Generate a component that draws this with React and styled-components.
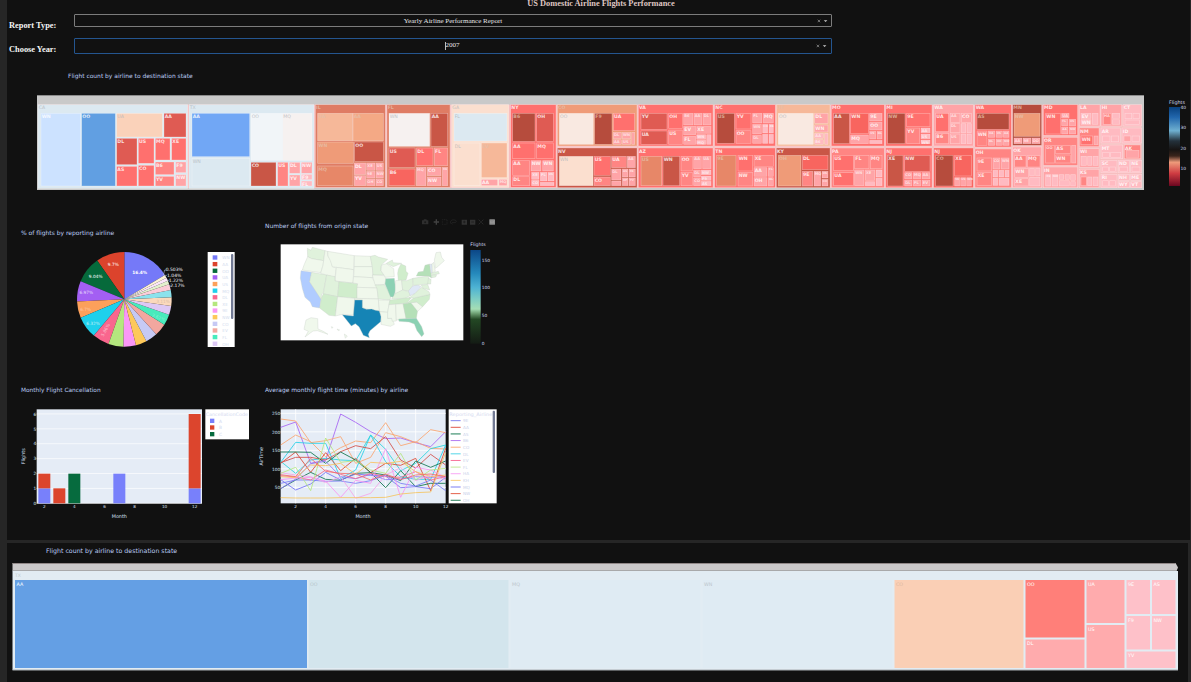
import React from 'react';
import styled, { createGlobalStyle } from 'styled-components';

const GlobalStyle = createGlobalStyle`
  html, body { margin: 0; padding: 0; background: #262626; overflow: hidden; }
  * { box-sizing: border-box; }
  svg { display: block; flex: none; }
`;

const sans = '"DejaVu Sans", Verdana, sans-serif';
const serif = '"Liberation Serif", "Times New Roman", serif';

const Page = styled.div`
  width: 1191px;
  height: 682px;
  display: flex;
  flex-direction: column;
  gap: 3px;
  padding-left: 7px;
  background: #262626;
`;
const Panel = styled.section`
  height: ${p => p.$height}px;
  margin-right: ${p => p.$right}px;
  background: #111111;
  overflow: hidden;
`;
const Heading = styled.h1`
  height: 14px;
  margin: 0;
  padding-left: 5px;
  text-align: center;
  font: bold 8.35px/7px ${serif};
  color: #dfc5c2;
`;
const FilterRow = styled.div`
  display: grid;
  grid-template-columns: 65px 758px;
  align-items: start;
  height: ${p => p.$height}px;
  padding-left: 2px;
`;
const FilterLabel = styled.label`
  padding-top: 6px;
  font: bold 8.4px/12px ${serif};
  color: #f4f4f4;
  white-space: nowrap;
`;
const Select = styled.div`
  display: flex;
  align-items: center;
  height: ${p => (p.$focused ? 16 : 13)}px;
  border: 1px solid ${p => (p.$focused ? '#24558f' : '#7c7c7c')};
  border-radius: 1px;
  padding-right: ${p => (p.$focused ? 4 : 3)}px;
`;
const SelectValue = styled.span`
  flex: 1;
  text-align: center;
  padding-left: 14px;
  padding-bottom: ${p => p.$lift || 0}px;
  font: 7.05px/10px ${serif};
  color: #e6e6e6;
`;
const Caret = styled.i`
  display: inline-block;
  width: 1px;
  height: 8px;
  margin-right: -1px;
  vertical-align: -3px;
  background: #bbbbbb;
`;
const FigureTitle = styled.h2`
  margin: 0;
  padding-top: ${p => p.$top || 0}px;
  padding-left: ${p => p.$indent}px;
  font: normal ${p => p.$size || 5.95}px/16px ${sans};
  color: #bccdf4;
  white-space: nowrap;
`;
const TreemapTitle = styled(FigureTitle)`
  height: ${p => p.$height}px;
`;
const TreemapRow = styled.div`
  display: flex;
  gap: 16px;
  padding-left: 30px;
`;
const FigureRow = styled.div`
  display: flex;
  height: ${p => p.$height}px;
`;
const Figure = styled.figure`
  width: ${p => p.$width}px;
  margin: 0;
  padding: ${p => p.$top}px 0 0;
`;
const FigureHead = styled.div`
  display: flex;
  justify-content: space-between;
  height: ${p => p.$height}px;
  padding-right: 5px;
`;
const Plot = styled.svg`
  margin-left: ${p => p.$left || 0}px;
  font-family: ${sans};
`;

/* Colour scale of the treemap tiles */
const C = {
  W: '#dce9f1', B: '#619fe2', b: '#71a7f5', l: '#cce2ff', w: '#f1f5f8', v: '#f6f1f0',
  p: '#fad2ba', q: '#fbdfcf', o: '#f6b899', e: '#f4a985', n: '#ef9b78', s: '#e78768', h: '#df7c64',
  k: '#b64c3d', c: '#c95646', d: '#df5b53', r: '#f8655f', t: '#ff706e', u: '#ff8583', f: '#ffa4a7', g: '#ffbac1', z: '#f9e9e1',
};

/* Each tile: x0, y0, x1, y1, colour key, label. One unit is a third of a pixel. */
const sections = [
  { x: 0, tiles: [
    [24,43,473,294,'W','CA'],[33,69,152,287,'l','WN'],[155,69,256,287,'B','OO'],[260,69,397,140,'p','UA'],[402,69,468,140,'d','AA'],
    [260,144,321,223,'d','DL'],[325,144,372,219,'t','US'],[376,144,420,209,'t','MQ'],[425,144,468,209,'t','XE'],
    [260,228,321,287,'t','AS'],[325,225,372,287,'t','CO'],[376,215,432,253,'u','B6'],[437,215,468,247,'f','F9'],[376,258,432,287,'u','YV'],[437,253,468,287,'f','NW'],
    [477,43,852,294,'W','TX'],[486,69,659,199,'b','AA'],[486,204,659,287,'W','WN'],[663,69,757,210,'w','OO'],[758,69,846,210,'v','MQ'],
    [663,216,738,287,'c','CO'],[743,216,774,287,'u','US'],[778,216,810,249,'f','DL'],[814,216,846,249,'f','NW'],[778,254,810,287,'f','YV'],[814,252,846,268,'g','F9'],[814,272,846,287,'g','FL'],
  ]},
  { x: 840, tiles: [
    [16,43,226,291,'h','IL'],[23,69,128,151,'o','UA'],[129,69,220,151,'e','AA'],[23,155,130,219,'n','WN'],[134,155,220,213,'c','OO'],[23,227,129,286,'s','MQ'],
    [133,218,167,253,'f','DL'],[133,256,167,286,'f','YV'],[170,218,195,240,'f','XE'],[198,218,220,240,'f','US'],[170,243,195,263,'f','9E'],[198,243,220,263,'f','NW'],[170,266,195,286,'f','OH'],[198,266,220,286,'f','CO'],
    [231,43,420,291,'h','FL'],[237,69,359,168,'v','WN'],[363,69,413,168,'c','AA'],[237,173,315,231,'d','US'],[320,173,369,226,'t','DL'],[373,173,413,226,'u','FL'],
    [237,236,315,286,'r','B6'],[319,231,348,286,'f','MQ'],[352,231,393,256,'f','CO'],[352,260,393,286,'f','NW'],[397,231,413,286,'f','XE'],
    [425,43,596,291,'q','GA'],[432,69,591,152,'W','FL'],[432,158,510,286,'q','DL'],[514,158,591,262,'o','EV'],[514,267,563,286,'f','AA'],[567,267,591,286,'f','MQ'],
    [602,43,738,291,'t','NY'],[608,69,675,153,'k','B6'],[680,69,730,153,'d','OH'],[608,158,675,205,'t','AA'],[680,158,730,205,'t','MQ'],
    [608,211,659,255,'u','AA'],[608,259,659,286,'u','DL'],[663,211,693,242,'f','NW'],[698,211,730,242,'f','WN'],[665,246,687,267,'g','XE'],[691,246,711,272,'g','FL'],[714,246,732,272,'g','US'],[665,270,687,286,'g','CO'],[691,276,732,286,'g',''],
  ]},
  { x: 1560, tiles: [
    [22,43,261,167,'n','CO'],[28,69,130,162,'z','OO'],[134,69,186,162,'k','F9'],[190,69,254,121,'t','UA'],[190,126,214,145,'f','DL'],[217,126,242,145,'f','WN'],[245,126,254,162,'f',''],[190,148,214,162,'f','AA'],[217,148,242,162,'f','US'],
    [22,173,261,292,'c','NV'],[28,198,129,286,'q','WN'],[132,198,181,255,'t','US'],[132,260,181,286,'u','CO'],[185,198,229,232,'u','UA'],[232,198,256,232,'f','AA'],[185,236,213,269,'f','DL'],[185,272,213,286,'f',''],[217,236,234,260,'f','AS'],[237,236,256,260,'f','XE'],[217,263,234,286,'f','HP'],[237,263,256,286,'f','YV'],
    [265,43,489,167,'t','VA'],[273,69,351,117,'d','YV'],[273,122,351,162,'d','UA'],[356,69,397,114,'t','OH'],[356,119,397,162,'u','US'],[401,69,429,104,'f','B6'],[432,69,456,104,'f','AA'],[459,69,483,104,'f','DL'],[401,108,437,134,'f','EV'],[401,138,437,162,'f','FL'],[440,108,483,129,'f','XE'],[440,133,467,147,'g','WN'],[440,150,467,162,'g','MQ'],[470,133,483,162,'g',''],
    [265,173,489,292,'t','AZ'],[273,198,335,286,'s','US'],[339,198,389,286,'c','WN'],[393,198,427,242,'u','OO'],[393,246,427,286,'u','YV'],[431,198,454,235,'f','AA'],[458,198,483,235,'f','UA'],[431,239,451,260,'f','DL'],[431,263,451,286,'f','CO'],[454,239,483,253,'g','NW'],[454,257,483,270,'g','F9'],[454,273,483,286,'g','AS'],
    [494,43,676,167,'t','NC'],[501,69,553,159,'k','US'],[558,69,603,116,'t','YV'],[558,121,603,159,'u','OO'],[608,69,636,98,'f','FL'],[640,69,670,98,'f','MQ'],[608,102,634,131,'f','WN'],[608,135,634,159,'f','DL'],[638,102,653,128,'g','CO'],[657,102,670,128,'g','XE'],[638,132,653,159,'g',''],[657,132,670,159,'g',''],
    [494,173,676,292,'t','TN'],[500,195,558,287,'s','9E'],[564,195,608,242,'t','WN'],[564,246,608,287,'u','NW'],[612,195,670,228,'u','XE'],[612,232,651,258,'f','AA'],[612,262,651,287,'f','OH'],[655,232,670,258,'f','FL'],[655,262,670,287,'f','DL'],
  ]},
  { x: 2220, tiles: [
    [19,43,180,167,'o','UT'],[25,69,130,162,'z','OO'],[134,69,174,99,'f','DL'],[134,104,174,125,'f','WN'],[134,129,160,144,'g','AA'],[134,148,160,162,'g','B6'],[164,129,174,162,'g',''],
    [19,173,180,292,'c','KY'],[25,195,93,287,'n','OH'],[97,195,174,238,'r','DL'],[97,243,128,287,'u','9E'],[132,243,152,287,'f','MQ'],[156,243,174,263,'f','US'],[156,267,174,287,'f','CO'],
    [184,43,343,167,'t','MO'],[191,69,238,160,'c','AA'],[242,69,295,130,'r','WN'],[242,134,295,160,'f','MQ'],[299,69,336,92,'f','9E'],[299,96,336,119,'f','OO'],[299,123,317,146,'f','US'],[321,123,336,146,'f','DL'],[299,150,336,160,'g',''],
    [184,173,343,292,'u','PA'],[191,195,250,241,'t','US'],[191,247,250,286,'t','UA'],[254,195,297,235,'u','FL'],[301,195,336,235,'u','MQ'],[254,239,282,286,'f','WN'],[286,239,314,270,'f','XE'],[318,239,336,260,'g',''],[318,264,336,286,'g',''],[286,274,314,286,'g',''],
    [347,43,486,167,'t','MI'],[353,69,405,160,'k','NW'],[410,69,480,109,'t','9E'],[410,113,449,160,'u','YV'],[453,113,480,127,'g','AA'],[453,131,480,145,'g','US'],[453,149,480,160,'g','WN'],
    [347,173,486,292,'t','NJ'],[353,195,399,287,'c','XE'],[404,195,480,243,'d','NW'],[404,247,426,265,'f','CO'],[430,247,452,265,'f','MQ'],[456,247,480,265,'f','AA'],[404,269,426,287,'f','DL'],[430,269,452,287,'f','FL'],[456,269,480,287,'f','EV'],
    [491,43,610,167,'f','WA'],[497,69,536,124,'t','UA'],[497,129,536,160,'u','B6'],[541,69,570,96,'f','AA'],[574,69,604,96,'f','CO'],[541,100,570,127,'f','DL'],[541,131,570,160,'f','US'],[574,100,587,127,'g',''],[591,100,604,127,'g',''],[574,131,587,160,'g',''],[591,131,604,160,'g',''],
    [491,173,610,292,'r','NJ'],[497,195,549,287,'k','CO'],[554,195,604,257,'r','XE'],[554,262,569,287,'f','9E'],[572,262,587,287,'f','US'],[590,262,604,287,'f','WN'],
  ]},
  { x: 2820, tiles: [
    [15,43,124,170,'t','WA'],[21,69,117,117,'k','AS'],[21,122,51,165,'u','WN'],[55,122,74,141,'f','UA'],[78,122,97,141,'f','US'],[100,122,117,141,'f','AA'],[55,146,74,165,'f','DL'],[78,146,97,165,'f','OO'],[100,146,117,165,'f','NW'],
    [15,176,124,292,'u','OH'],[21,203,65,242,'u','9E'],[21,247,65,285,'u','XE'],[69,203,90,236,'f','CO'],[94,203,117,236,'f','WN'],[69,240,83,260,'g',''],[87,240,101,260,'g',''],[105,240,117,260,'g',''],[69,264,83,285,'g',''],[87,264,117,285,'g',''],
    [128,43,215,165,'k','MN'],[132,69,210,138,'n','NW'],[132,143,156,160,'f','AA'],[159,143,183,160,'f','9E'],[186,143,210,160,'f','OO'],
    [128,170,215,292,'f','OK'],[134,196,168,230,'u','AA'],[172,196,210,230,'u','MQ'],[134,234,175,261,'f','WN'],[179,234,193,257,'g',''],[197,234,210,257,'g',''],[134,265,175,287,'f','XE'],[179,261,210,287,'g',''],
    [220,43,323,135,'t','MD'],[227,69,271,131,'t','WN'],[275,69,297,83,'f','UA'],[275,87,294,106,'f','FL'],[298,87,317,106,'f','US'],[275,110,294,131,'f','AA'],[298,110,317,131,'f','NW'],
    [220,141,323,225,'u','OR'],[227,165,253,218,'u','OO'],[257,165,301,190,'u','AS'],[257,194,301,218,'u','WN'],[305,165,317,218,'f',''],
    [220,230,323,292,'f','IN'],[227,253,242,287,'g','XE'],[246,253,264,287,'g','NW'],[268,253,281,267,'g',''],[285,253,298,267,'g',''],[302,253,316,270,'g',''],[268,271,298,287,'g',''],[302,274,316,287,'g',''],
    [328,43,390,107,'f','LA'],[333,69,363,84,'g','EV'],[333,88,363,102,'g','WN'],[367,69,384,102,'g',''],
    [328,113,387,169,'u','NM'],[333,137,368,163,'t','WN'],[372,137,384,163,'f',''],
    [328,175,387,231,'f','WI'],[333,198,349,225,'g',''],[353,198,365,225,'g',''],[369,198,384,225,'g',''],[328,237,387,292,'f','KS'],[333,260,349,286,'u',''],[353,260,365,286,'g',''],[369,260,384,286,'g',''],
    [393,43,455,107,'f','HI'],[400,69,423,102,'u','HA'],[427,69,449,84,'g',''],[427,88,449,102,'g',''],
    [459,43,515,107,'g','CT'],[465,69,485,85,'g',''],[489,69,508,85,'g',''],[465,89,508,102,'g',''],
    [393,113,451,158,'g','AR'],[398,137,420,154,'g',''],[424,137,446,154,'g',''],[456,113,515,158,'g','ID'],[462,137,482,153,'f',''],[486,137,509,153,'g',''],
    [393,164,458,205,'g','MT'],[398,186,418,201,'g',''],[422,186,452,201,'g',''],[463,164,512,205,'u','AK'],[468,180,507,201,'f',''],
    [393,210,441,247,'g','SC'],[398,230,415,243,'g',''],[419,230,436,243,'g',''],[445,210,478,247,'g','ND'],[449,230,473,243,'g',''],[482,210,515,247,'g','NE'],[486,230,510,243,'g',''],
    [393,252,441,292,'g','RI'],[398,271,415,287,'g',''],[419,271,436,287,'g',''],[445,252,478,270,'g','NH'],[482,252,515,270,'g','ME'],[445,274,478,292,'g','WY'],[482,274,515,292,'g','VT'],
  ]},
];

const inkFor = c => {
  if ('Wwvpqz'.includes(c)) return '#b3b6ba';
  if ('koensh'.includes(c)) return '#e6bfa8';
  return '#fff';
};
const Tile = ({ t: [x0, y0, x1, y1, c, label] }) => {
  const width = x1 - x0;
  const size = width < 20 ? 8.5 : width < 30 ? 11 : 14;
  return (
    <g>
      <rect x={x0} y={y0} width={width} height={y1 - y0} fill={C[c]} stroke="#fff" strokeOpacity=".38" strokeWidth="2" />
      {label && (
        <text x={x0 + 2} y={y0 + size} fontSize={size} fontWeight={'Wwvpqz'.includes(c) ? 'normal' : 'bold'}
          fill={inkFor(c)} fillOpacity={width < 30 ? 0.65 : 0.82}>{label}</text>
      )}
    </g>
  );
};

const StateTreemap = () => (
  <Plot width="1107" height="95" viewBox="21 14 3321 285">
    <rect x="21" y="15" width="3321" height="285" fill="#c9c9c9" />
    <rect x="24" y="43" width="3311" height="250" fill="#f7bfc0" />
    {sections.map(s => (
      <g key={s.x} transform={`translate(${s.x} 0)`}>
        {s.tiles.map((t, i) => <Tile key={i} t={t} />)}
      </g>
    ))}
  </Plot>
);

const ColorBar = () => (
  <Plot width="31" height="95" viewBox="0 0 31 95">
    <defs>
      <linearGradient id="rdbu" x1="0" y1="0" x2="0" y2="1">
        <stop offset="0" stopColor="#08407e" /><stop offset=".13" stopColor="#2166ac" />
        <stop offset=".3" stopColor="#6fb0d0" /><stop offset=".43" stopColor="#24313b" />
        <stop offset=".54" stopColor="#171413" /><stop offset=".62" stopColor="#3a241b" />
        <stop offset=".7" stopColor="#ee9a7a" /><stop offset=".84" stopColor="#cf3c42" /><stop offset="1" stopColor="#6b0720" />
      </linearGradient>
    </defs>
    <text x="9" y="9" fontSize="4.8" fill="#d4def5">Flights</text>
    <rect x="9" y="12" width="11" height="79" fill="url(#rdbu)" />
    {[[40, 13.5], [30, 34], [20, 54.5], [10, 75]].map(([v, y]) => (
      <text key={v} x="20.5" y={y} fontSize="4.4" fill="#d4def5">{v}</text>
    ))}
  </Plot>
);

/* Pie slices: start and end angle in degrees clockwise from the top */
const slices = [
  [0, 59, '#7579f8'], [-35, 0, '#dc432c'], [-67.5, -35, '#066a3b'], [-92.6, -67.5, '#a35ff3'], [-112.8, -92.6, '#fca05b'],
  [-140, -112.8, '#1fd0ec'], [-160.5, -140, '#f9668e'], [-179, -160.5, '#b4e77e'], [-194.3, -179, '#f997f6'], [-207.8, -194.3, '#fdc85a'],
  [-222.4, -207.8, '#c6c9f4'], [-237.6, -222.4, '#f2a79f'], [-251, -237.6, '#48ebbc'], [-262, -251, '#ddc8f5'], [-272.6, -262, '#fbd9bc'],
  [-281.5, -272.6, '#8be2ec'], [-288.7, -281.5, '#fbccd8'], [-293, -288.7, '#e2f0cd'], [-297, -293, '#fbe6fb'], [-301, -297, '#fcf2d8'],
];
const point = a => {
  const r = (a * Math.PI) / 180;
  return `${(343 + 142 * Math.sin(r)).toFixed(1)} ${(253 - 142 * Math.cos(r)).toFixed(1)}`;
};
const legendItems = [['WN', 0], ['AA', 1], ['OO', 2], ['UA', 3], ['US', 4], ['MQ', 5], ['DL', 6], ['XE', 7], ['9E', 8], ['NW', 9], ['CO', 10], ['EV', 11], ['FL', 12], ['OH', 13]];

const AirlinePie = () => (
  <Plot width="175" height="119" viewBox="180 78 525 357" $left={63}>
    {slices.map(([a, b, c]) => (
      <path key={a} fill={c} d={`M343 253L${point(a)}A142 142 0 0 1 ${point(b)}Z`} />
    ))}
    <g fontSize="13" fill="#fff" textAnchor="middle">
      <text x="389" y="177" fontWeight="bold">16.4%</text>
      <text x="310" y="154">9.7%</text>
      <text x="257" y="188">9.04%</text>
      <text x="229" y="237" fillOpacity=".75">6.97%</text>
      <text x="227" y="287" fillOpacity=".45">6.7%</text>
      <text x="249" y="330" fillOpacity=".7">6.32%</text>
      <text x="287" y="349" fillOpacity=".6" transform="rotate(-62 287 345)">5.86%</text>
      <text x="459" y="265" fill="#c8b19e" fillOpacity=".7">3.11%</text>
      <text x="445" y="312" fillOpacity=".35" transform="rotate(22 445 308)">3.62%</text>
    </g>
    <path d="M460 181L464 165H468M464 185L466 181H471M471 196H478M475 208L479 213H484" fill="none" stroke="#cfd6e6" strokeWidth="1.5" />
    <g fontSize="13.5" fill="#f2f5fa">
      <text x="467" y="169">0.503%</text><text x="471" y="185">1.04%</text>
      <text x="476" y="202">1.22%</text><text x="481" y="217">2.17%</text>
    </g>
    <rect x="593" y="111" width="81" height="285" fill="#fff" />
    {legendItems.map(([name, i]) => (
      <g key={name}>
        <rect x="608" y={121 + i * 19.9} width="14" height="13" fill={slices[i][2]} />
        <text x="637" y={133 + i * 19.9} fontSize="12.5" fill="#d3dbee">{name}</text>
      </g>
    ))}
    <rect x="663" y="117" width="7" height="195" rx="3" fill="#727a94" />
  </Plot>
);

/* State outlines: fill key and polygon points */
const G = { a: '#f0f8ec', b: '#e0f2dc', c: '#d0edcc', d: '#b5e0b8', e: '#8bd1b3', t: '#1584b5', p: '#b0ccff', f: '#dfe8f6' };
const states = [
  ['b', '157,115 168,121 172,112 210,122 206,152 170,146 158,140'],
  ['a', '158,140 170,146 206,152 204,166 197,188 142,180 147,165'],
  ['p', '138,182 170,187 164,215 196,262 198,268 194,294 172,290 166,276 150,262 142,235 136,204'],
  ['b', '170,187 215,195 205,248 200,252 198,268 164,215'],
  ['a', '210,122 218,124 219,138 228,152 232,170 244,174 240,202 197,190 204,166'],
  ['a', '218,124 298,137 296,179 244,172 232,170 226,152 219,138'],
  ['a', '244,172 296,179 294,219 240,213'], ['b', '215,195 240,200 240,213 252,215 248,260 205,252'],
  ['c', '252,215 308,221 306,265 248,260'], ['c', '205,251 248,260 241,318 222,316 194,294 200,262'],
  ['a', '248,260 299,265 295,315 262,313 241,318'], ['a', '298,137 346,139 352,170 298,170'],
  ['a', '298,170 352,170 354,203 296,200'], ['a', '296,200 350,203 360,215 368,234 306,232 308,221 294,219'],
  ['a', '306,232 366,234 370,267 306,265'], ['a', '299,265 370,267 373,303 350,301 322,293 322,270 299,270'],
  ['b', '346,139 360,136 370,141 398,148 384,160 378,168 378,182 387,195 354,195 352,170'],
  ['a', '352,195 388,197 396,212 388,224 360,224'], ['b', '360,226 388,224 398,240 408,258 405,270 370,267 366,234'],
  ['a', '370,270 404,271 398,307 374,305'], ['a', '374,305 398,307 398,325 412,326 418,343 406,349 378,343 378,330'],
  ['a', '380,165 394,161 416,176 418,200 392,202 387,195 378,182'],
  ['e', '392,206 418,205 422,240 416,262 406,260 398,240 390,222'],
  ['c', '430,178 438,162 452,168 453,184 459,190 453,210 430,212 428,190'], ['b', '394,160 412,150 414,158 440,160 415,170'],
  ['a', '422,212 440,210 443,240 420,254'], ['b', '440,212 455,212 474,205 473,228 460,243 443,240'],
  ['b', '410,266 422,250 443,240 462,245 466,257 450,265'], ['c', '405,270 470,262 455,280 402,284'],
  ['a', '402,284 422,283 424,333 412,334 410,325 398,325 398,307'], ['a', '422,283 444,281 453,320 452,328 424,330'],
  ['d', '444,281 468,278 488,302 484,325 453,326'], ['a', '468,278 485,276 503,290 488,304'],
  ['c', '455,280 476,264 525,253 523,268 503,290 485,276 468,278'], ['b', '462,264 480,250 500,232 522,245 525,253 476,264'],
  ['f', '460,243 473,228 488,224 498,230 480,250 466,257'], ['b', '474,205 520,198 523,212 518,222 475,226'],
  ['d', '484,198 490,186 505,184 510,166 524,162 528,190 530,204 520,198'],
  ['f', '524,163 531,162 532,188 528,190'], ['a', '531,162 536,157 541,184 532,188'],
  ['a', '538,150 543,128 556,126 560,142 568,152 548,170 541,175'],
  ['b', '528,190 550,184 553,191 530,196'], ['b', '530,196 545,194 542,201 530,203'], ['b', '520,205 528,208 527,222 518,222'],
  ['b', '498,226 518,223 524,240 505,235'],
  ['a', '153,330 168,323 188,326 189,357 205,364 219,373 187,362 174,363 150,381 160,364 147,358'],
  ['a', '229,350 234,352 231,355'], ['a', '246,357 254,360 250,362'], ['a', '268,372 277,378 271,385'],
  ['t', '299,270 322,270 322,293 334,298 350,297 361,301 373,303 378,320 377,335 345,362 340,373 343,383 325,376 312,350 301,341 289,348 262,314 295,318'],
  ['e', '431,327 453,326 484,325 500,350 507,372 500,380 486,362 478,342 462,336 450,335 432,334'],
];

const OriginMap = () => (
  <Plot width="225" height="110" viewBox="60 90 675 330" $left={17}>
    <defs>
      <linearGradient id="gnbu" x1="0" y1="0" x2="0" y2="1">
        <stop offset="0" stopColor="#0c4787" /><stop offset=".25" stopColor="#2589bc" />
        <stop offset=".4" stopColor="#4eb3d3" /><stop offset=".52" stopColor="#7bccc4" />
        <stop offset=".63" stopColor="#a5deb5" /><stop offset=".68" stopColor="#6a9b6e" />
        <stop offset=".74" stopColor="#234824" /><stop offset="1" stopColor="#141b14" />
      </linearGradient>
    </defs>
    <rect x="77" y="103" width="548" height="288" fill="#fff" />
    {states.map(([c, pts]) => (
      <polygon key={pts} points={pts} fill={G[c]} stroke="#c8d0c8" strokeWidth="1.1" strokeLinejoin="round" />
    ))}
    <text x="646" y="109" fontSize="14" fill="#d4def5">Flights</text>
    <rect x="646" y="120" width="31" height="281" fill="url(#gnbu)" />
    {[[150, 155], [100, 238], [50, 321], [0, 405]].map(([v, y]) => (
      <text key={v} x="680" y={y} fontSize="13" fill="#d4def5">{v}</text>
    ))}
  </Plot>
);

const ModeBar = () => (
  <svg width="75" height="16" viewBox="495 11 225 48" fill="#2e2e2e" stroke="none">
    <path d="M501 30h4l2-3h7l2 3h4v12h-19z" /><circle cx="510.500" cy="35.500" r="3" fill="#1a1a1a" />
    <path d="M542 27h4v6h6v4h-6v6h-4v-6h-6v-4h6z" fill="#414141" />
    <rect x="562" y="28" width="14" height="14" fill="none" stroke="#2b2b2b" strokeWidth="2" strokeDasharray="3 2" />
    <path d="M588 40c-5-8 3-13 11-11s5 9-2 8-9 1-5 5" fill="none" stroke="#2b2b2b" strokeWidth="2" />
    <path d="M620 28h16v15h-16zM645 28h16v15h-16z" fill="#323232" />
    <path d="M624 35h8M628 31v8M649 35h8" stroke="#1a1a1a" strokeWidth="2" />
    <path d="M671 28l6 6M685 28l-6 6M671 42l6-6M685 42l-6-6" stroke="#2e2e2e" strokeWidth="2.500" />
    <rect x="703" y="27" width="17" height="16" rx="1" fill="#8b8b8b" />
    <path d="M707 32v7M711 35v4M715 32v7" stroke="#a4a4a4" strokeWidth="1.500" />
  </svg>
);

const bars = [[85, 325, 45, 0], [85, 281, 44, 1], [130, 325, 45, 1], [175, 281, 89, 2], [310, 281, 89, 0], [536, 325, 45, 0], [536, 102, 223, 1]];
const barColors = ['#7880fb', '#dc452d', '#066b3e'];

const CancellationBars = () => (
  <Plot width="235" height="120" viewBox="24 72 705 360" $left={11}>
    <rect x="80" y="88" width="496" height="282" fill="#e5ecf6" />
    {[0, 1, 2, 3, 4, 5, 6].map(v => (
      <g key={v}>
        <path d={`M80 ${370 - v * 44.7}H576`} stroke="#fff" strokeWidth="2" />
        <text x="79" y={375 - v * 44.7} textAnchor="end" fontSize="13" fill="#d8e2f8">{v}</text>
      </g>
    ))}
    {bars.map(([x, y, h, c]) => <rect key={`${x}-${y}`} x={x} y={y} width="36" height={h} fill={barColors[c]} />)}
    {[2, 4, 6, 8, 10, 12].map((m, i) => (
      <text key={m} x={103 + i * 90.2} y="384" textAnchor="middle" fontSize="12.5" fill="#d8e2f8">{m}</text>
    ))}
    <text x="328" y="413" textAnchor="middle" fontSize="14.500" fill="#d8e2f8">Month</text>
    <text x="40" y="234" textAnchor="middle" fontSize="14.500" fill="#d8e2f8" transform="rotate(-90 40 229)">Flights</text>
    <rect x="586" y="88" width="131" height="90" fill="#fff" />
    <text x="587" y="108" fontSize="14" fill="#d3d9ef" textLength="127" lengthAdjust="spacingAndGlyphs">CancellationCode</text>
    {['A', 'B', 'C'].map((n, i) => (
      <g key={n}>
        <rect x="600" y={116 + i * 20} width="13" height="13" fill={barColors[i]} />
        <text x="627" y={128 + i * 20} fontSize="13" fill="#d3d9ef">{n}</text>
      </g>
    ))}
  </Plot>
);

/* One value per month, in plot units from the top */
const series = [
  ['#a35ff3', [142, 126, 250, 240, 102, 127, 155, 176, 174, 188, 200, 155]],
  ['#fba26a', [117, 123, 188, 182, 170, 250, 232, 158, 170, 188, 149, 158]],
  ['#fba26a', [195, 165, 185, 230, 203, 183, 188, 128, 197, 185, 205, 207]],
  ['#1fcfe8', [247, 187, 190, 190, 296, 270, 165, 245, 290, 298, 298, 195]],
  ['#25d3da', [244, 280, 240, 235, 240, 242, 165, 208, 272, 250, 206, 195]],
  ['#dc432c', [250, 216, 277, 218, 272, 235, 278, 250, 256, 235, 332, 205]],
  ['#d24842', [248, 232, 232, 240, 215, 197, 206, 170, 240, 264, 223, 255]],
  ['#077044', [216, 216, 217, 250, 216, 240, 278, 323, 272, 320, 310, 310]],
  ['#0c714c', [326, 300, 277, 298, 301, 280, 278, 285, 302, 243, 262, 243]],
  ['#726cf5', [299, 330, 312, 277, 300, 282, 286, 288, 323, 320, 326, 292]],
  ['#7478f5', [310, 300, 300, 304, 303, 310, 302, 286, 310, 318, 300, 332]],
  ['#8d75f3', [326, 297, 251, 244, 290, 296, 283, 299, 297, 290, 292, 290]],
  ['#f9668e', [287, 291, 300, 270, 283, 296, 280, 290, 292, 275, 300, 290]],
  ['#f992f2', [299, 294, 292, 303, 352, 301, 310, 206, 352, 262, 270, 292]],
  ['#f7a3e8', [278, 285, 290, 308, 290, 355, 340, 285, 263, 302, 285, 300]],
  ['#b4e77e', [280, 262, 332, 174, 247, 242, 270, 280, 220, 300, 270, 265]],
  ['#f5c35c', [353, 354, 354, 354, 353, 353, 353, 352, 342, 338, 336, 218]],
  ['#fbc05b', [290, 293, 255, 257, 250, 283, 247, 250, 244, 275, 290, 285]],
  ['#f16d66', [284, 290, 235, 274, 280, 282, 300, 282, 299, 285, 282, 290]],
];
const lineLegend = ['9E', 'AA', 'AS', 'B6', 'CO', 'DL', 'EV', 'FL', 'HA', 'KH', 'MQ', 'NW', 'OH'];
const legendColors = ['#8284ee', '#e0584a', '#1c7d56', '#b47cf2', '#fbb07b', '#52d6e8', '#f8749a', '#c3ea98', '#f9a8f5', '#fbd07b', '#7d7ff2', '#e4604a', '#257e58'];

const FlightTimeLines = () => (
  <Plot width="242" height="120" viewBox="9 72 726 360">
    <rect x="77" y="88" width="495" height="282" fill="#e5ecf6" />
    <path d="M77 100H572M77 155.500H572M77 211H572M77 266.500H572M77 322H572M122 88V370M212 88V370M302 88V370M392 88V370M482 88V370" stroke="#fff" strokeWidth="2.500" />
    {series.map(([c, ys], i) => (
      <polyline key={i} points={ys.map((y, m) => `${77 + m * 45},${y}`).join(' ')} fill="none" stroke={c} strokeOpacity=".85" strokeWidth="2.900" />
    ))}
    {[250, 200, 150, 100, 50].map((v, i) => (
      <text key={v} x="76" y={105 + i * 55.5} textAnchor="end" fontSize="13" fill="#d8e2f8">{v}</text>
    ))}
    {[2, 4, 6, 8, 10, 12].map((m, i) => (
      <text key={m} x={122 + i * 90} y="385" textAnchor="middle" fontSize="12.5" fill="#d8e2f8">{m}</text>
    ))}
    <text x="324" y="413" textAnchor="middle" fontSize="14.500" fill="#d8e2f8">Month</text>
    <text x="20" y="234" textAnchor="middle" fontSize="14.500" fill="#d8e2f8" transform="rotate(-90 20 229)">AirTime</text>
    <rect x="581" y="88" width="144" height="282" fill="#fff" />
    <text x="583" y="108" fontSize="14" fill="#d3d9ef" textLength="129" lengthAdjust="spacingAndGlyphs">Reporting_Airline</text>
    {lineLegend.map((n, i) => (
      <g key={n}>
        <path d={`M587 ${122 + i * 19.9}h30`} stroke={legendColors[i]} strokeWidth="3" />
        <text x="624" y={127 + i * 19.9} fontSize="12.500" fill="#c9d1ea">{n}</text>
      </g>
    ))}
    <rect x="713" y="92" width="7" height="187" rx="3" fill="#727a94" />
  </Plot>
);

const texasTiles = [
  [15, 580, 307, 668, '#649fe4', 'AA', '#fff'], [308.5, 580, 508.5, 668, '#d3e5ed', 'OO', '#b8c5cc'],
  [510.5, 580, 700.5, 668, '#dfebf3', 'MQ', '#bcc5cc'], [702.5, 580, 892.5, 668, '#dfebf3', 'WN', '#bcc5cc'],
  [894.5, 580, 1023.5, 668, '#facfb5', 'CO', '#dcb7a0'], [1025.5, 580, 1084.5, 637.5, '#ff7f79', 'OO', '#fff'],
  [1025.5, 639.5, 1084.5, 668, '#ffabad', 'DL', '#fff'], [1086.5, 580, 1124.5, 623, '#ffabad', 'UA', '#fff'],
  [1086.5, 625, 1124.5, 668, '#ffabad', 'US', '#fff'], [1126.5, 580, 1150, 614, '#fec1c9', '9E', '#fff'],
  [1152, 580, 1175.5, 614, '#fec1c9', 'AS', '#fff'], [1126.5, 616, 1150, 649.5, '#fec1c9', 'F9', '#fff'],
  [1152, 616, 1175.5, 649.5, '#fec1c9', 'NW', '#fff'], [1126.5, 651.5, 1175.5, 668, '#fec1c9', 'YV', '#fff'],
];

const TexasTreemap = () => (
  <Plot width="1166" height="108" viewBox="12 563 1166 108" $left={5}>
    <path d="M12.500 563H1175.500L1178 567.500L1176.500 571H12.500Z" fill="#cbc9ca" />
    <path d="M12.500 563.500H1175.500" stroke="#918888" />
    <path d="M12.500 570.800H1177" stroke="#8e8f92" strokeWidth=".8" />
    <rect x="12.500" y="571" width="1165.500" height="99" fill="#e2ecf3" />
    <path d="M12.500 670H1178" stroke="#a9afb3" />
    <text x="15" y="577" fontSize="4.500" fill="#c0c8cb">TX</text>
    {texasTiles.map(([x0, y0, x1, y1, c, label, ink]) => (
      <g key={`${x0}-${y0}`}>
        <rect x={x0} y={y0} width={x1 - x0} height={y1 - y0} fill={c} />
        <text x={x0 + 1.5} y={y0 + 5.5} fontSize="4.800" fill={ink}>{label}</text>
      </g>
    ))}
  </Plot>
);

const SelectIcons = () => (
  <svg width="11" height="6" viewBox="0 0 11 6">
    <path d="M.7 1.700l2.500 2.500M3.200 1.700L.7 4.200" stroke="#999" strokeWidth=".7" />
    <path d="M6.800 2.200h3.600L8.600 4z" fill="#c9c9c9" />
  </svg>
);

export default function App() {
  return (
    <>
      <GlobalStyle />
      <Page>
        <Panel $height={540} $right={1}>
          <Heading>US Domestic Airline Flights Performance</Heading>
          <FilterRow $height={24}>
            <FilterLabel>Report Type:</FilterLabel>
            <Select><SelectValue>Yearly Airline Performance Report</SelectValue><SelectIcons /></Select>
          </FilterRow>
          <FilterRow $height={30}>
            <FilterLabel>Choose Year:</FilterLabel>
            <Select $focused><SelectValue $lift={2}><Caret />2007</SelectValue><SelectIcons /></Select>
          </FilterRow>
          <TreemapTitle $indent={61} $height={27}>Flight count by airline to destination state</TreemapTitle>
          <TreemapRow><StateTreemap /><ColorBar /></TreemapRow>
          <FigureRow $height={190}>
            <Figure $width={251} $top={35}>
              <FigureTitle $indent={14} $size={6}>% of flights by reporting airline</FigureTitle>
              <AirlinePie />
            </Figure>
            <Figure $width={242} $top={24}>
              <FigureHead $height={26}>
                <FigureTitle $indent={7} $top={4}>Number of flights from origin state</FigureTitle>
                <ModeBar />
              </FigureHead>
              <OriginMap />
            </Figure>
          </FigureRow>
          <FigureRow $height={160}>
            <Figure $width={251} $top={2}>
              <FigureHead $height={22}><FigureTitle $indent={14} $size={5.85}>Monthly Flight Cancellation</FigureTitle></FigureHead>
              <CancellationBars />
            </Figure>
            <Figure $width={242} $top={2}>
              <FigureHead $height={22}><FigureTitle $indent={7}>Average monthly flight time (minutes) by airline</FigureTitle></FigureHead>
              <FlightTimeLines />
            </Figure>
          </FigureRow>
        </Panel>
        <Panel $height={139} $right={3}>
          <TreemapTitle $indent={39} $size={6.25} $height={20}>Flight count by airline to destination state</TreemapTitle>
          <TexasTreemap />
        </Panel>
      </Page>
    </>
  );
}
